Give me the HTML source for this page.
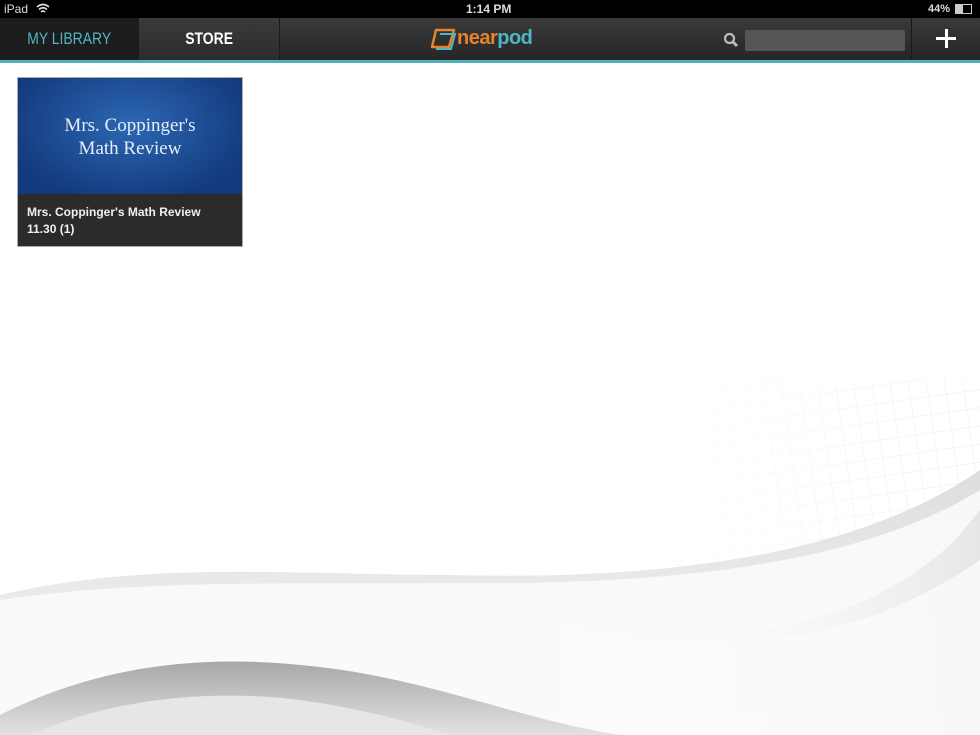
<!DOCTYPE html>
<html><head><meta charset="utf-8"><style>
body{margin:0;width:980px;height:735px;overflow:hidden;background:#fff;font-family:"Liberation Sans",sans-serif;position:relative}
.sb{position:absolute;top:0;left:0;width:980px;height:18px;background:#000;color:#ddd;font-size:12px;font-weight:bold}
.tb{position:absolute;top:18px;left:0;width:980px;height:42px;background:linear-gradient(#3a3a3a,#262626)}
.teal{position:absolute;top:60px;left:0;width:980px;height:3px;background:#4fb3bf}
.tab{position:absolute;top:0;height:42px;line-height:42px;text-align:center;font-family:"Liberation Sans Narrow","Liberation Sans",sans-serif;font-size:17px}
.tab span{display:inline-block;transform:scaleX(0.82)}
</style></head><body>
<svg style="position:absolute;left:0;top:0" width="980" height="735">
<defs>
<pattern id="grid" width="18" height="18" patternUnits="userSpaceOnUse" patternTransform="rotate(-8)"><path d="M0 0H18M0 0V18" stroke="#e4e4e4" stroke-width="1" fill="none"/></pattern>
<linearGradient id="fade" x1="0" y1="0" x2="1" y2="0"><stop offset="0.35" stop-color="#fff" stop-opacity="1"/><stop offset="1" stop-color="#fff" stop-opacity="0.2"/></linearGradient>
<linearGradient id="sh" x1="0" y1="0" x2="0" y2="1"><stop offset="0" stop-color="#cfcfcf"/><stop offset="1" stop-color="#f6f6f6"/></linearGradient>
<linearGradient id="dk" x1="0" y1="0" x2="0" y2="1"><stop offset="0" stop-color="#a8a8a8"/><stop offset="1" stop-color="#e2e2e2"/></linearGradient>
<linearGradient id="rs" x1="0" y1="0" x2="1" y2="0"><stop offset="0.3" stop-color="#fff" stop-opacity="0"/><stop offset="1" stop-color="#c4c4c4"/></linearGradient>
</defs>
<rect x="450" y="380" width="530" height="355" fill="url(#grid)"/>
<rect x="450" y="380" width="530" height="355" fill="url(#fade)"/>
<path d="M0 595 C150 560 300 575 450 575 C650 580 850 560 980 470 L980 735 L0 735Z" fill="url(#sh)" opacity="0.7"/>
<path d="M0 600 C150 578 300 585 450 583 C650 585 850 570 980 490 L980 735 L0 735Z" fill="#fbfbfb" opacity="0.9"/>
<path d="M540 620 C700 650 850 640 955 540 L980 510 L980 735 L540 735Z" fill="url(#rs)" opacity="0.35"/>
<path d="M560 625 C700 660 850 650 980 560 L980 735 L560 735Z" fill="#fafafa" opacity="0.85"/>
<path d="M0 735 L0 715 C100 665 200 655 300 665 C420 675 520 720 620 735Z" fill="url(#dk)"/>
<path d="M30 735 C120 695 220 690 300 700 C370 710 420 725 450 735Z" fill="#e6e6e6"/>
</svg>
<div class="sb"><span style="position:absolute;left:4px;top:2px;font-weight:normal">iPad</span>
<svg style="position:absolute;left:36px;top:3px" width="14" height="11"><path d="M1 4 Q7 -1 13 4 M3 6.5 Q7 3 11 6.5 M5 9 Q7 7 9 9" stroke="#ddd" stroke-width="1.6" fill="none"/></svg>
<span style="position:absolute;left:466px;top:2px">1:14 PM</span>
<span style="position:absolute;left:928px;top:3px;font-size:11px">44%</span>
<div style="position:absolute;left:955px;top:4px;width:15px;height:8px;border:1px solid #ccc"><div style="width:7px;height:8px;background:#ccc"></div></div></div>
<div class="tb">
<div class="tab" style="left:0;width:139px;background:#1c1c1c;color:#4db7c5"><span>MY LIBRARY</span></div>
<div class="tab" style="left:139px;width:140px;background:linear-gradient(#3a3a3a,#2c2c2c);color:#fff;border-right:1px solid #1a1a1a;font-weight:bold"><span>STORE</span></div>
<div style="position:absolute;left:431px;top:10px;width:24px;height:22px">
<svg width="26" height="24"><path d="M5 2 H23 L18 19 H1Z" fill="none" stroke="#e8822d" stroke-width="2.5" stroke-linejoin="round"/><path d="M9 6 H24 L20 21 H5" fill="none" stroke="#4db7c5" stroke-width="2"/></svg></div>
<span style="position:absolute;left:457px;top:9px;font-size:20px;font-weight:bold;letter-spacing:-0.5px"><span style="color:#e8822d">near</span><span style="color:#4db7c5">pod</span></span>
<svg style="position:absolute;left:723px;top:14px" width="16" height="16"><circle cx="6.5" cy="6.5" r="4.5" stroke="#bbb" stroke-width="2.2" fill="none"/><path d="M10 10 L14 14" stroke="#bbb" stroke-width="3"/></svg>
<div style="position:absolute;left:745px;top:12px;width:160px;height:21px;background:#555;border-radius:2px"></div>
<div style="position:absolute;left:911px;top:0;width:1px;height:42px;background:#1a1a1a"></div>
<div style="position:absolute;left:936px;top:19px;width:20px;height:3px;background:#fff"></div>
<div style="position:absolute;left:944.5px;top:11px;width:3px;height:19px;background:#fff"></div>
</div>
<div class="teal"></div>
<div style="position:absolute;left:17px;top:77px;width:224px;height:168px;border:1px solid #aaa;background:#2b2b2b">
<div style="height:116px;background:radial-gradient(ellipse at 50% 40%,#2d67b5,#133a7c 80%);text-align:center;color:#e8eef8;font-family:'Liberation Serif',serif;font-size:19px;line-height:23px;padding-top:36px;box-sizing:border-box">Mrs. Coppinger's<br>Math Review</div>
<div style="color:#f0f0f0;font-size:12px;font-weight:bold;line-height:17px;padding:10px 0 0 9px">Mrs. Coppinger's Math Review<br>11.30 (1)</div>
</div>
</body></html>
